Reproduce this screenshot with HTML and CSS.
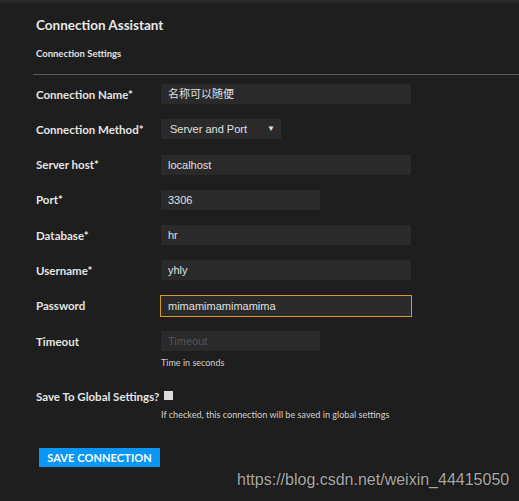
FILE: index.html
```html
<!DOCTYPE html>
<html lang="en">
<head>
<meta charset="utf-8">
<title>Connection Assistant</title>
<link rel="stylesheet" href="styles.css">
</head>
<body>
<div class="topbar"></div>
<main class="page">
  <h1 class="title">Connection Assistant</h1>
  <h2 class="subtitle">Connection Settings</h2>
  <div class="divider"></div>
  <form class="form">
    <div class="row">
      <label class="label">Connection Name*</label>
      <div class="field wide">名称可以随便</div>
    </div>
    <div class="row">
      <label class="label">Connection Method*</label>
      <div class="field select"><span>Server and Port</span><span class="arrow">▼</span></div>
    </div>
    <div class="row">
      <label class="label">Server host*</label>
      <div class="field wide">localhost</div>
    </div>
    <div class="row">
      <label class="label">Port*</label>
      <div class="field narrow">3306</div>
    </div>
    <div class="row">
      <label class="label">Database*</label>
      <div class="field wide">hr</div>
    </div>
    <div class="row">
      <label class="label">Username*</label>
      <div class="field wide">yhly</div>
    </div>
    <div class="row">
      <label class="label">Password</label>
      <div class="field wide focused">mimamimamimamima</div>
    </div>
    <div class="row">
      <label class="label">Timeout</label>
      <div class="field narrow placeholder">Timeout</div>
    </div>
    <div class="help help-time">Time in seconds</div>
    <div class="check-row">
      <span class="label">Save To Global Settings?</span>
      <span class="checkbox"></span>
    </div>
    <div class="help help-check">If checked, this connection will be saved in global settings</div>
    <button type="button" class="save">SAVE CONNECTION</button>
  </form>
</main>
<div class="watermark">https://blog.csdn.net/weixin_44415050</div>
</body>
</html>
```
FILE: styles.css
```css
html, body {
  margin: 0;
  padding: 0;
  background: #1e1e1e;
  width: 519px;
  height: 501px;
  overflow: hidden;
}
body {
  position: relative;
  font-family: "Lato", "Liberation Sans", sans-serif;
  color: #e6e6e6;
}
.topbar {
  height: 5px;
  background: linear-gradient(#2a2a2a, #1e1e1e);
}
.page {
  padding-left: 36px;
}
.title {
  margin: 12px 0 0 0;
  font-size: 13.5px;
  font-weight: 700;
  line-height: 16px;
  color: #e8e8e8;
}
.subtitle {
  margin: 15px 0 0 0;
  font-size: 9.5px;
  font-weight: 700;
  line-height: 12px;
  color: #e0e0e0;
}
.divider {
  margin: 14px 0 0 -3px;
  height: 1px;
  background: #5a5a5a;
}
.form {
  margin-top: 9px;
  display: flex;
  flex-direction: column;
}
.row {
  display: flex;
  align-items: center;
  height: 20px;
  margin-bottom: 15.3px;
}
.label {
  width: 125px;
  flex: none;
  font-size: 11.5px;
  font-weight: 700;
  color: #e4e4e4;
}
.field {
  height: 20px;
  box-sizing: border-box;
  background: #2a2a2a;
  font-family: "Liberation Sans", Arial, "Noto Sans CJK SC", sans-serif;
  font-size: 11px;
  line-height: 20px;
  padding-left: 7px;
  color: #e0e0e0;
}
.wide { width: 250px; }
.narrow { width: 159px; }
.select {
  width: 120px;
  display: flex;
  justify-content: space-between;
  padding-left: 9px;
  padding-right: 6px;
}
.arrow {
  font-size: 8px;
  color: #e0e0e0;
}
.focused {
  outline: 1px solid #d99a22;
}
.placeholder {
  color: #555555;
}
.help {
  margin-left: 125px;
  font-size: 9px;
  color: #d0d0d0;
  line-height: 12px;
}
.help-time {
  margin-top: -9px;
}
.check-row {
  display: flex;
  align-items: center;
  margin-top: 21px;
}
.check-row .label {
  width: auto;
}
.checkbox {
  width: 9px;
  height: 9px;
  background: #dcdcdc;
  margin-left: 5px;
  margin-top: -3px;
}
.help-check {
  margin-top: 6px;
  font-size: 9.1px;
}
.save {
  align-self: flex-start;
  margin: 27px 0 0 3px;
  width: 121px;
  height: 19px;
  padding: 0;
  border: none;
  background: #0a96f5;
  color: #ffffff;
  font-family: "Lato", "Liberation Sans", sans-serif;
  font-weight: 700;
  font-size: 11px;
  letter-spacing: 0.1px;
}
.watermark {
  position: absolute;
  left: 237px;
  top: 471px;
  font-family: "Liberation Sans", Arial, sans-serif;
  font-size: 16px;
  color: #a9a9a9;
  text-shadow: 0 0 1px #000;
}
```
